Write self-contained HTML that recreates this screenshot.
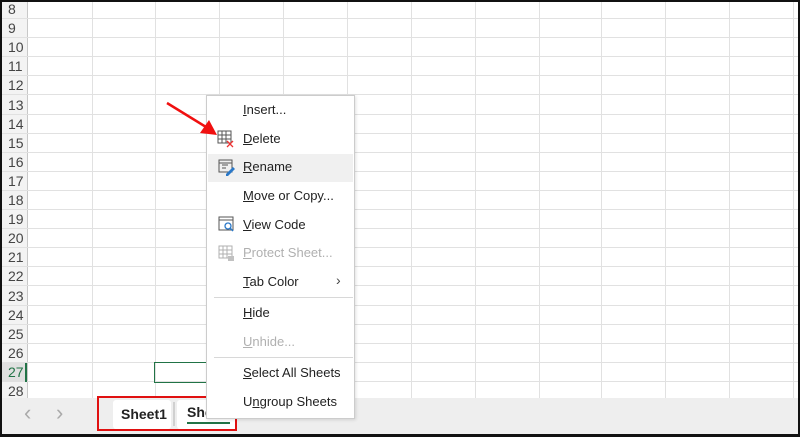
<!DOCTYPE html>
<html><head><style>
*{margin:0;padding:0;box-sizing:border-box}
body{width:800px;height:437px;overflow:hidden;background:#fff;position:relative;font-family:"Liberation Sans",sans-serif}
.abs{position:absolute}
.rh{position:absolute;left:2px;width:25px;text-align:left;padding-left:6px;font-size:14px;color:#444;line-height:19px}
.hl{position:absolute;left:2px;right:2px;height:1px;background:#e1e1e1}
.vl{position:absolute;top:0;width:1px;height:398px;background:#e1e1e1}
.mi{position:absolute;left:243px;font-size:13px;color:#222;line-height:16px}
.mi.d{color:#b0b0b0}
u{text-decoration:underline}
</style></head><body>
<div class="abs" style="left:2px;top:0;width:25px;height:398px;background:#f3f3f3"></div>
<div class="abs" style="left:27px;top:0;width:1px;height:398px;background:#c8c8c8"></div>
<div class="vl" style="left:92px"></div><div class="vl" style="left:155px"></div><div class="vl" style="left:219px"></div><div class="vl" style="left:283px"></div><div class="vl" style="left:347px"></div><div class="vl" style="left:411px"></div><div class="vl" style="left:475px"></div><div class="vl" style="left:539px"></div><div class="vl" style="left:601px"></div><div class="vl" style="left:665px"></div><div class="vl" style="left:729px"></div><div class="vl" style="left:793px"></div>
<div id="rows"></div>
<script>
var r=document.getElementById('rows'),h='';
for(var i=0;i<21;i++){var y=i*19.1;h+='<div class="hl" style="top:'+(y+18).toFixed(0)+'px"></div><div class="rh" style="top:'+(y).toFixed(0)+'px;'+(i==19?'color:#217346;background:#e0e0e0;border-right:2px solid #217346':'')+'">'+(8+i)+'</div>';}
r.innerHTML=h;
</script>
<div class="abs" style="left:154px;top:362px;width:53px;height:21px;border:1.5px solid #217346"></div>
<!-- tab bar -->
<div class="abs" style="left:2px;top:398px;width:796px;height:36px;background:#eeeeee"></div>
<div class="abs" style="left:24px;top:400px;color:#aaa;font-size:22px">&#8249;</div>
<div class="abs" style="left:56px;top:400px;color:#aaa;font-size:22px">&#8250;</div>
<div class="abs" style="left:113px;top:400px;width:58px;height:29px;background:#fff;border-radius:3px;font-weight:bold;font-size:14px;color:#222;padding:6px 0 0 8px">Sheet1</div>
<div class="abs" style="left:173px;top:402px;width:2px;height:24px;background:#d0d0d0"></div>
<div class="abs" style="left:177px;top:400px;width:60px;height:29px;background:#fff;border-radius:3px;font-weight:bold;font-size:14px;color:#222;padding:4px 0 0 10px">She</div>
<div class="abs" style="left:187px;top:422px;width:43px;height:2px;background:#217346"></div>
<div class="abs" style="left:97px;top:396px;width:140px;height:35px;border:2px solid #e01010"></div>
<!-- menu -->
<div class="abs" style="left:206px;top:95px;width:149px;height:324px;background:#fff;border:1px solid #ccc;box-shadow:1px 1px 3px rgba(0,0,0,.12)"></div>
<div class="abs" style="left:208px;top:154px;width:145px;height:28px;background:#f0f0f0"></div>
<div class="abs" style="left:214px;top:297px;width:139px;height:1px;background:#d8d8d8"></div>
<div class="abs" style="left:214px;top:357px;width:139px;height:1px;background:#d8d8d8"></div>
<div class="mi" style="top:102px"><u>I</u>nsert...</div>
<div class="mi" style="top:131px"><u>D</u>elete</div>
<div class="mi" style="top:159px"><u>R</u>ename</div>
<div class="mi" style="top:188px"><u>M</u>ove or Copy...</div>
<div class="mi" style="top:217px"><u>V</u>iew Code</div>
<div class="mi d" style="top:245px"><u>P</u>rotect Sheet...</div>
<div class="mi" style="top:274px"><u>T</u>ab Color</div>
<div class="abs" style="left:336px;top:272px;font-size:14px;color:#444">&#8250;</div>
<div class="mi" style="top:305px"><u>H</u>ide</div>
<div class="mi d" style="top:334px"><u>U</u>nhide...</div>
<div class="mi" style="top:365px"><u>S</u>elect All Sheets</div>
<div class="mi" style="top:394px">U<u>n</u>group Sheets</div>
<!-- icons -->
<svg class="abs" style="left:217px;top:130px" width="18" height="18"><rect x="1" y="1" width="13" height="12" fill="none" stroke="#555"/><path d="M1 5H14M1 9H14M5 1V13M9 1V13" stroke="#555"/><path d="M10 11l6 6M16 11l-6 6" stroke="#e33" stroke-width="1.3"/></svg>
<svg class="abs" style="left:218px;top:159px" width="18" height="18"><rect x="1" y="1" width="13" height="12" fill="none" stroke="#555"/><path d="M1 4H14M4 6H10M4 9H8" stroke="#555"/><path d="M8 15l7-7 2 2-7 7H8z" fill="#2a78c8"/></svg>
<svg class="abs" style="left:218px;top:216px" width="18" height="18"><rect x="1" y="1" width="14" height="13" fill="none" stroke="#555"/><path d="M1 4H15" stroke="#555"/><circle cx="10" cy="10" r="3" fill="none" stroke="#2a78c8" stroke-width="1.3"/><path d="M12 12l3 3" stroke="#2a78c8" stroke-width="1.5"/></svg>
<svg class="abs" style="left:218px;top:245px" width="18" height="18" opacity=".45"><rect x="1" y="1" width="13" height="12" fill="none" stroke="#555"/><path d="M1 5H14M1 9H14M5 1V13M9 1V13" stroke="#555"/><rect x="10" y="11" width="6" height="5" fill="#777"/></svg>
<!-- arrow -->
<svg class="abs" style="left:160px;top:96px" width="70" height="50"><path d="M7 7L46 31" stroke="#f01010" stroke-width="2.5"/><path d="M57 39L40 37L49 24z" fill="#f01010"/></svg>
<!-- frame -->
<div class="abs" style="left:0;top:0;width:800px;height:437px;border:2px solid #111;border-bottom-width:3px"></div>
</body></html>
